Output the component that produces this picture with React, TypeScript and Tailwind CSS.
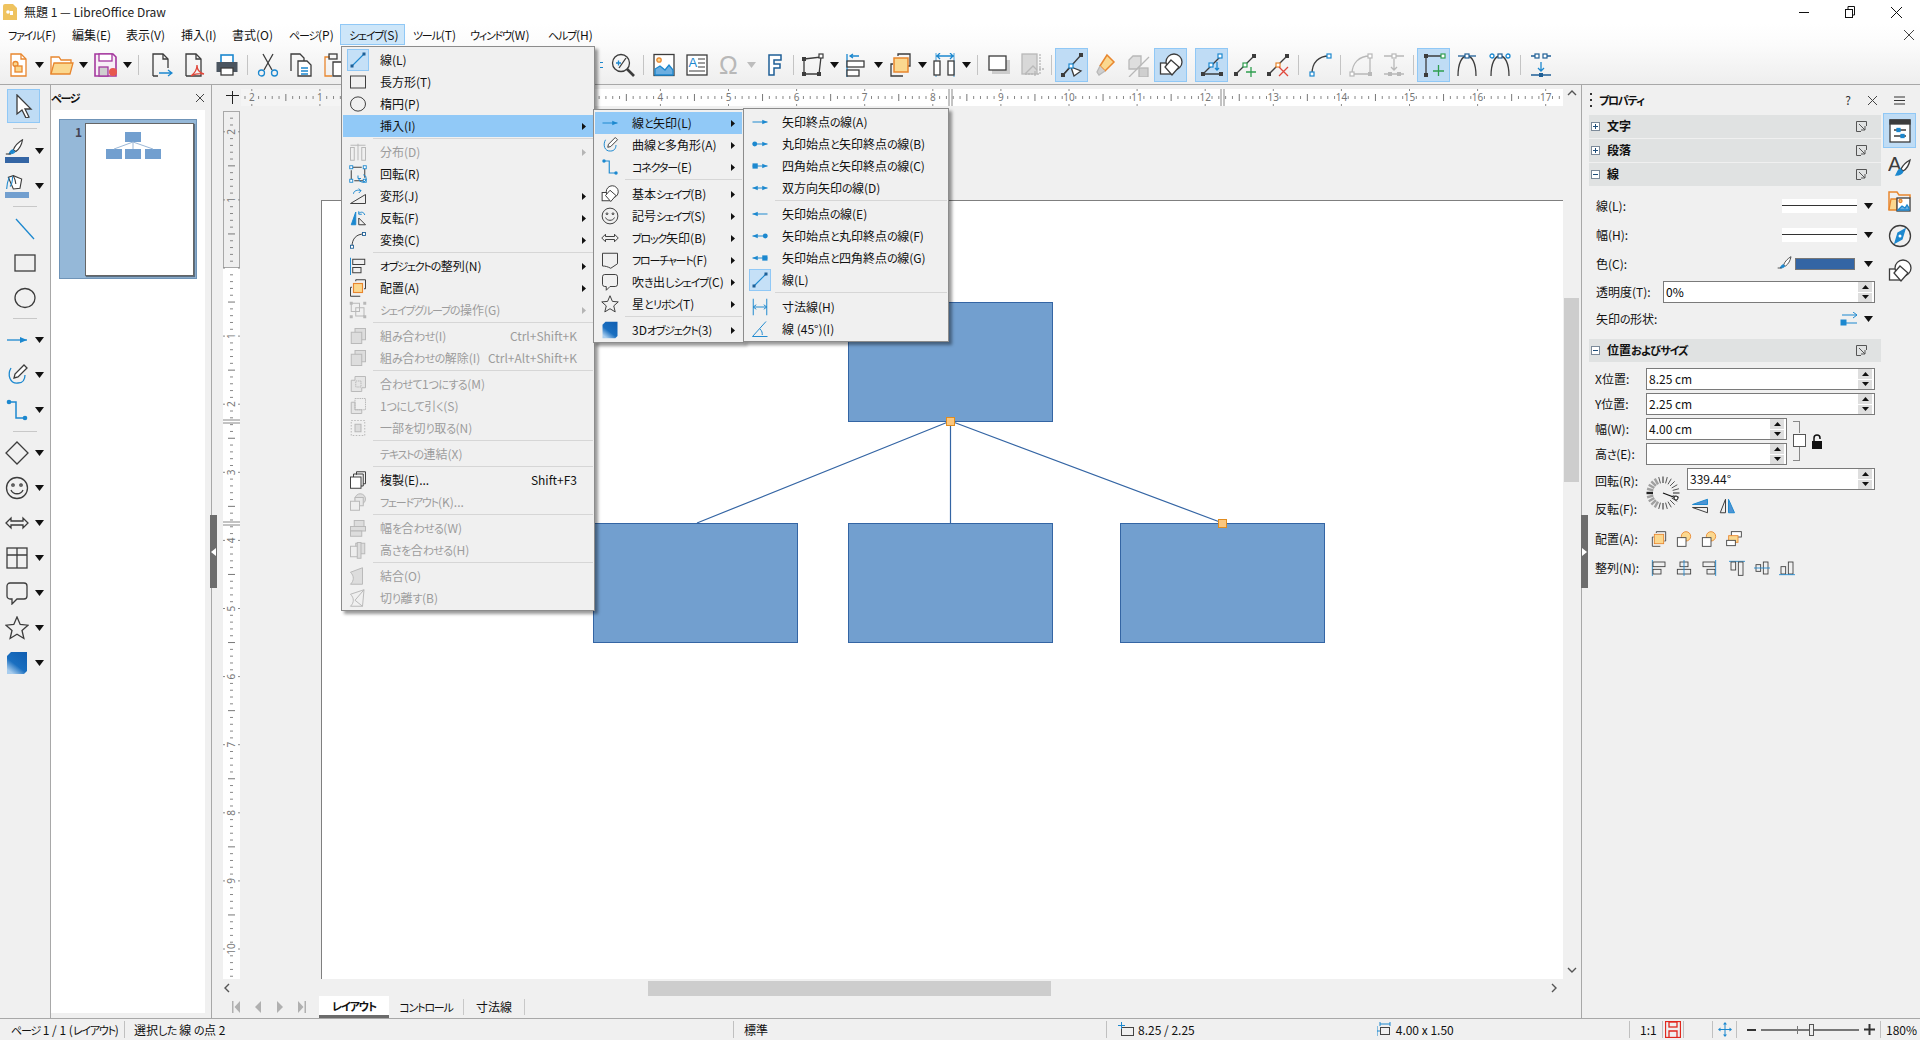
import type { ReactNode } from 'react';

const K = '#3c3c3c';
const B = '#1c88cf';
const D = '#1f5f96';
const O = '#e8862e';
const Y = '#fbd88f';
const G = '#b8b8b8';

// kana in the reference's UI font is much narrower than in Noto, so tighten just those runs
function J({ children }: { children: string }) {
  const parts = children.split(/([ぁ-ん]+|[ァ-ヶー]+)/);
  return (
    <>
      {parts.map((p, i) => {
        if (/^[ァ-ヶー]/.test(p)) return <span key={i} className="text-[11px] tracking-[-1.2px]">{p}</span>;
        if (/^[ぁ-ん]/.test(p)) return <span key={i} className="text-[11px] tracking-[-0.6px]">{p}</span>;
        return p;
      })}
    </>
  );
}

function Ic({ s = 24, children }: { s?: number; children: ReactNode }) {
  return (
    <svg width={s} height={s} viewBox="0 0 24 24" fill="none" stroke={K} strokeWidth={1.3} className="shrink-0">
      {children}
    </svg>
  );
}

const dot = (x: number, y: number, c = K) => <rect x={x - 2} y={y - 2} width="4" height="4" fill={c} stroke="none" />;
const hollow = (x: number, y: number, c = B) => <rect x={x - 2} y={y - 2} width="4" height="4" fill="#fff" stroke={c} strokeWidth="1.2" />;

function lineArrow(l: '' | 'a' | 'c' | 's', r: '' | 'a' | 'c' | 's') {
  const end = (k: string, x: number, dir: number) => {
    if (k === 'a') return <path d={`M${x} 12l${-7 * dir} -3v6z`} fill={B} stroke="none" />;
    if (k === 'c') return <circle cx={x - 3 * dir} cy="12" r="3.2" fill={B} stroke="none" />;
    if (k === 's') return <rect x={x - (dir > 0 ? 7 : 0)} y="8.5" width="7" height="7" fill={B} stroke="none" />;
    return null;
  };
  return (
    <>
      <path d="M2 12h20" stroke={B} />
      {end(l, 2, -1)}
      {end(r, 22, 1)}
    </>
  );
}

const cube = (
  <>
    <defs>
      <linearGradient id="cube" x1="1" y1="0" x2="0.3" y2="1">
        <stop offset="0" stopColor="#0f5db0" />
        <stop offset="0.65" stopColor="#1a6fc0" />
        <stop offset="1" stopColor="#a8cdee" />
      </linearGradient>
    </defs>
    <path d="M2 5L6 1h16v19l-3 3H2z" fill="url(#cube)" stroke="none" />
  </>
);

const ic: Record<string, ReactNode> = {
  newDoc: (
    <>
      <path d="M5 1h10l5 5v17H5z" stroke={O} fill="#fff" />
      <path d="M15 1v5h5" stroke={O} />
      <circle cx="9.5" cy="11" r="2.5" fill={Y} stroke={O} />
      <rect x="9" y="13" width="7" height="6" fill={Y} stroke={O} />
    </>
  ),
  open: (
    <>
      <path d="M1 21V4h8l2 3h10v3" stroke={O} fill="#fff" />
      <path d="M1 21l3-11h19l-3 11z" fill={Y} stroke={O} />
    </>
  ),
  save: (
    <>
      <path d="M1 1h18l3 3v19H1z" stroke="#a4379e" strokeWidth="1.6" fill="#f7eef6" />
      <rect x="5" y="1" width="13" height="7" stroke="#a4379e" fill="#fff" />
      <rect x="5" y="14" width="9" height="9" fill="#cfcfcf" stroke="#a4379e" />
      <circle cx="19" cy="19" r="4" fill="#e7584f" stroke="none" />
    </>
  ),
  exportDoc: (
    <>
      <path d="M4 23V1h10l5 5v9M4 23h5" />
      <path d="M14 1v5h5" />
      <path d="M10 20h13m-4-3l4 3-4 3" stroke={B} />
    </>
  ),
  pdf: (
    <>
      <path d="M4 23V1h10l5 5v17H4" />
      <path d="M14 1v5h5" />
      <path d="M9 23c4-3 6-7 6-11 0 5 3 8 7 9-5-1-9 0-13 2z" stroke="#e0483c" />
    </>
  ),
  print: (
    <>
      <rect x="6" y="2" width="12" height="8" stroke={B} fill="#fff" strokeWidth="1.6" />
      <rect x="1.5" y="9" width="21" height="10" fill="#4b5560" stroke="none" />
      <rect x="6" y="15" width="12" height="7" fill="#fff" stroke={K} />
    </>
  ),
  cut: (
    <>
      <path d="M7 1l9 16M17 1L8 17" />
      <circle cx="5.5" cy="20" r="3" stroke={B} />
      <circle cx="18.5" cy="20" r="3" stroke={B} />
    </>
  ),
  copy: (
    <>
      <path d="M2 18V1h9l4 4v3" />
      <path d="M9 23V8h9l4 4v11z" fill="#fff" />
      <path d="M12 15h7M12 18h7M12 21h7" stroke={B} />
    </>
  ),
  paste: (
    <>
      <path d="M8 4H3v19h7" stroke={O} />
      <rect x="7" y="1" width="8" height="5" />
      <path d="M11 23V9h11v14z" fill="#fff" />
    </>
  ),
  zoom: (
    <>
      <circle cx="10" cy="10" r="8.5" />
      <path d="M16 16l7 7" strokeWidth="2.6" />
      <path d="M5 10h5M7.5 7.5v5" stroke={B} />
      <path d="M8 15l7-10" stroke={K} />
    </>
  ),
  image: (
    <>
      <rect x="2" y="1.5" width="20" height="21" fill="#fff" />
      <circle cx="7" cy="7" r="2.2" fill={Y} stroke={O} />
      <path d="M3 22v-6l5-3 5 4 4-5 4 5v5z" fill="#6caee0" stroke={B} />
    </>
  ),
  textbox: (
    <>
      <rect x="2" y="2" width="20" height="20" fill="#fff" />
      <text x="3.5" y="14" fontSize="13" fill={B} stroke="none" fontFamily="Liberation Sans, sans-serif">A</text>
      <path d="M13 6h7M13 10h7M13 14h7M4 18h16" strokeWidth="1.2" />
    </>
  ),
  omega: <text x="1" y="21" fontSize="25" fill={G} stroke="none" fontFamily="Liberation Sans, sans-serif">Ω</text>,
  fontwork: <path d="M7 2h12v5h-7v4h6v4h-6v7H7z" stroke={D} strokeWidth="1.5" fill="#fff" />,
  points: (
    <>
      <path d="M3 6l17-2-2 17H3z" />
      {dot(3, 6)}
      {dot(3, 21)}
      {dot(18, 21)}
      {hollow(20, 3, K)}
    </>
  ),
  align: (
    <>
      <path d="M2 1v23" stroke={B} />
      <path d="M14 3H5m3-2L5 3l3 2" stroke={B} />
      <rect x="2" y="8" width="17" height="6" fill="#fff" />
      <rect x="2" y="17" width="12" height="6" fill="#fff" />
    </>
  ),
  arrange: (
    <>
      <path d="M9 3V1h12v12h-2M14 23H2V11h2" />
      <rect x="5" y="5" width="14" height="14" fill={Y} stroke={O} strokeWidth="1.5" />
    </>
  ),
  distribute: (
    <>
      <path d="M3 3h18M7 0l-3 3 3 3M17 0l3 3-3 3" stroke={B} />
      <path d="M3 0v24M21 0v24" stroke={B} strokeWidth="0.8" />
      <rect x="1" y="8" width="6" height="14" fill="#fff" />
      <rect x="15" y="8" width="6" height="14" fill="#fff" />
    </>
  ),
  shadow: (
    <>
      <path d="M5 7h18v14H5z" fill="#ccc" stroke="none" />
      <rect x="2" y="3" width="17" height="14" fill="#fff" />
    </>
  ),
  crop: (
    <>
      <rect x="2" y="1" width="15" height="20" fill="#d8d8d8" stroke={G} />
      <path d="M5 21l8-8 4 4" stroke={G} />
      <path d="M20 1v20H5M19 16h5M15 23v-5" stroke={G} strokeDasharray="2 1" />
    </>
  ),
  ptsToggle: (
    <>
      <path d="M3 22L21 2" />
      <path d="M11 13l-8 9" />
      <path d="M11 14l10 4-7 5z" fill="#fff" />
      {dot(3, 22)}
      {dot(21, 2)}
      {hollow(11, 13)}
    </>
  ),
  glue: (
    <>
      <path d="M14 2l7 7-9 9-5-5z" fill={Y} stroke={O} strokeWidth="1.5" />
      <path d="M7 13l-3 6 2 3 6-4" fill="#cfcfcf" stroke={G} />
    </>
  ),
  extrude: (
    <>
      <path d="M3 7l4-4h8v9l-4 4H3z" fill="#dedede" stroke={G} />
      <path d="M23 4L3 24" stroke={G} />
      <rect x="13" y="15" width="9" height="9" fill="#cfcfcf" stroke={G} />
    </>
  ),
  shapes: (
    <>
      <rect x="1.5" y="10" width="11" height="11" fill="#fff" />
      <circle cx="15" cy="9" r="8" fill="#fff" />
      <path d="M12 7l8 7-7 8-7-8z" fill="#fff" />
    </>
  ),
  lineAngle: (
    <>
      <path d="M3 21L20 4M3 21h18" />
      {dot(3, 21)}
      {dot(21, 21)}
      {hollow(20, 3)}
      {hollow(11, 12)}
      <path d="M17 9v8m-2-2l2 2 2-2" stroke={B} />
    </>
  ),
  addPt: (
    <>
      <path d="M3 21L20 4" />
      {dot(3, 21)}
      {dot(21, 3)}
      {hollow(12, 12, '#2f9e4f')}
      <path d="M13 19h10M18 14v10" stroke="#2f9e4f" />
    </>
  ),
  delPt: (
    <>
      <path d="M3 21L20 4" />
      {dot(3, 21)}
      {dot(21, 3)}
      {hollow(12, 12, O)}
      <path d="M13 14l9 9M22 14l-9 9" stroke="#e0483c" />
    </>
  ),
  curve: (
    <>
      <path d="M4 21C4 9 11 3 21 3" />
      {hollow(4, 21)}
      {hollow(21, 3)}
    </>
  ),
  curveOff: (
    <>
      <path d="M3 21C3 10 10 3 21 3v18H3" stroke={G} />
      {hollow(3, 21, G)}
      {hollow(21, 3, G)}
      {dot(21, 21, G)}
    </>
  ),
  pointDownOff: (
    <>
      <path d="M2 3h20M2 21h20" stroke={G} />
      {hollow(12, 3, G)}
      <path d="M12 6v11m-3-3l3 3 3-3" stroke={G} />
      {dot(8, 21, G)}
      {dot(17, 21, G)}
    </>
  ),
  cornerAdd: (
    <>
      <path d="M4 22V3h17" />
      {dot(4, 3)}
      {dot(4, 22)}
      {hollow(21, 3, '#2f9e4f')}
      <path d="M11 18h11M16.500 12v11" stroke="#2f9e4f" />
    </>
  ),
  arch: (
    <>
      <path d="M3 23C3 10 7 3 12 3s9 7 9 20" />
      <path d="M3 3h18" stroke={D} />
      {hollow(12, 3, D)}
    </>
  ),
  arch2: (
    <>
      <path d="M3 23C3 10 7 3 12 3s9 7 9 20" />
      <circle cx="4" cy="3" r="2" stroke={B} fill="#fff" />
      <circle cx="20" cy="3" r="2" stroke={B} fill="#fff" />
      {hollow(12, 3, D)}
    </>
  ),
  snapLine: (
    <>
      <path d="M2 3h4M18 3h4M2 22h20" stroke={D} />
      {hollow(8, 3, D)}
      {hollow(16, 3, D)}
      <path d="M12 9v9m-3-3l3 3 3-3" stroke={B} />
      {dot(12, 22, D)}
    </>
  ),
  line: (
    <>
      <path d="M4 20L20 4" stroke={B} strokeWidth="1.5" />
      {dot(4, 20, D)}
      {dot(20, 4, D)}
    </>
  ),
  rect: <rect x="2" y="4" width="20" height="16" />,
  ellipse: <ellipse cx="12" cy="12" rx="10" ry="9.500" />,
  dist: (
    <g stroke={G}>
      <rect x="2" y="6" width="5" height="17" />
      <rect x="17" y="6" width="5" height="17" />
      <path d="M12 1v22M2 3h20" />
    </g>
  ),
  rotate: (
    <>
      <path d="M3 3h18v18H3z" stroke={K} strokeDasharray="14 4" />
      {hollow(3, 3)}
      {hollow(21, 3)}
      {hollow(3, 21)}
      {hollow(21, 21)}
      <path d="M19 13a5 5 0 1 1-6 5m-1-4v4h4" stroke={B} />
    </>
  ),
  transform: (
    <>
      <path d="M2 22L22 10v12z" />
      <path d="M6 9c0-4 6-6 10-4m-3-3l3 3-3 3" stroke={B} />
    </>
  ),
  flip: (
    <>
      <path d="M9 4L3 21h6z" fill={B} stroke={B} />
      <path d="M13 12l9 9h-9z" />
      <path d="M13 6c3-3 7-2 8 2m-8-5v4h4" stroke={B} />
    </>
  ),
  convert: (
    <>
      <path d="M4 21C4 10 10 4 20 4" />
      {hollow(4, 21, D)}
      {hollow(20, 4, D)}
    </>
  ),
  alignObj: (
    <>
      <path d="M2 1v23" stroke={B} />
      <rect x="5" y="3" width="16" height="7" />
      <rect x="5" y="14" width="11" height="7" />
    </>
  ),
  arrangeM: (
    <>
      <path d="M9 3V1h13v12h-2M15 23H2V11h2" />
      <rect x="6" y="6" width="12" height="12" fill={Y} stroke={O} strokeWidth="1.5" />
    </>
  ),
  group: (
    <g stroke={G}>
      <rect x="3" y="3" width="11" height="11" />
      <rect x="9" y="9" width="11" height="11" />
      {dot(3, 3, G)}
      {dot(21, 3, G)}
      {dot(3, 21, G)}
      {dot(21, 21, G)}
    </g>
  ),
  combine: (
    <g stroke={G}>
      <rect x="8" y="2" width="14" height="15" fill="#ddd" />
      <rect x="3" y="7" width="14" height="15" fill="#ddd" />
    </g>
  ),
  merge: (
    <g stroke={G}>
      <path d="M8 7V2h14v15h-5v5H3V7z" fill="#e5e5e5" />
      <rect x="9" y="8" width="7" height="8" strokeDasharray="2 1" />
    </g>
  ),
  subtract: (
    <g stroke={G}>
      <path d="M8 7H3v15h14v-5H8z" fill="#e5e5e5" />
      <rect x="8" y="2" width="14" height="15" strokeDasharray="2 1" />
    </g>
  ),
  intersect: (
    <g stroke={G}>
      <rect x="3" y="2" width="18" height="20" strokeDasharray="2 2" />
      <rect x="8" y="7" width="8" height="10" fill="#ddd" />
    </g>
  ),
  dup: (
    <>
      <path d="M10 5V1h12v16h-3" />
      <path d="M6 9V4h13v16h-3" />
      <rect x="2" y="8" width="14" height="15" fill="#fff" />
    </>
  ),
  fade: (
    <g stroke={G}>
      <circle cx="15" cy="8" r="7" fill="#ddd" />
      <rect x="8" y="6" width="11" height="11" fill="#e8e8e8" />
      <rect x="2" y="11" width="12" height="12" fill="#eee" />
    </g>
  ),
  eqW: (
    <g stroke={G}>
      <rect x="7" y="2" width="13" height="11" fill="#ddd" />
      <rect x="2" y="10" width="20" height="6" fill="#ddd" />
      <rect x="2" y="16" width="15" height="7" fill="#ddd" />
    </g>
  ),
  eqH: (
    <g stroke={G}>
      <rect x="9" y="3" width="12" height="14" fill="#ddd" />
      <rect x="2" y="7" width="10" height="14" fill="#eee" />
      <rect x="11" y="2" width="5" height="21" fill="#ddd" />
    </g>
  ),
  connect: <path d="M2 7l16-6v22L2 23c5-5 5-11 0-16z" stroke={G} fill="#ddd" />,
  split: (
    <g stroke={G}>
      <path d="M2 7l18-6-2 22H2c5-5 5-11 0-16z" />
      <path d="M20 1L8 15l10 8" />
    </g>
  ),
  arrowE: lineArrow('', 'a'),
  circArrow: lineArrow('c', 'a'),
  sqArrow: lineArrow('s', 'a'),
  dblArrow: lineArrow('a', 'a'),
  arrowS: lineArrow('a', ''),
  arrowCirc: lineArrow('a', 'c'),
  arrowSq: lineArrow('a', 's'),
  curvePoly: (
    <>
      <path d="M6 5c-4 7-1 16 7 15 5 0 7-4 7-8" stroke={B} />
      <path d="M19 2l3 3-9 9-4 1 1-4z" fill="#fff" />
    </>
  ),
  connector: (
    <>
      <path d="M4 4h7v16h9" stroke={B} strokeWidth="1.5" />
      <circle cx="4" cy="4" r="2.300" fill={B} stroke="none" />
      <circle cx="20" cy="20" r="2.300" fill={B} stroke="none" />
    </>
  ),
  smile: (
    <>
      <circle cx="12" cy="12" r="10.500" />
      <circle cx="8" cy="9" r="1.200" />
      <circle cx="16" cy="9" r="1.200" />
      <path d="M6 14c2 5 10 5 12 0" />
    </>
  ),
  block: <path d="M1 12l5-5v3h12V7l5 5-5 5v-3H6v3z" />,
  flow: <path d="M2 3h20v14l-9 6c-4-2-7-3-11-3z" />,
  callout: <path d="M5 2h14a3 3 0 0 1 3 3v10a3 3 0 0 1-3 3h-7l-5 5v-5H5a3 3 0 0 1-3-3V5a3 3 0 0 1 3-3z" />,
  star: <path d="M12 1l3.200 7.500 7.800.7-6 5.300 1.900 8L12 18.300 5.100 22.500l1.900-8-6-5.300 7.800-.7z" />,
  cube,
  dim: (
    <>
      <path d="M3 1v22M21 1v22" stroke={B} />
      <path d="M3 12h18M7 9l-4 3 4 3M17 9l4 3-4 3" stroke={B} />
    </>
  ),
  angle45: (
    <>
      <path d="M2 22h20M2 22L20 2M12 12c3 3 3 5 3 8" stroke={B} />
    </>
  ),
  stack4: (
    <>
      <rect x="2" y="2" width="20" height="20" />
      <path d="M2 9h20M12 2v20" />
    </>
  ),
  diamond: <path d="M12 1l11 11-11 11L1 12z" />,
  diag: <path d="M3 3l18 20" stroke={B} />,
  cursor: <path d="M5 1l14 14h-6l4 8-3 1-4-8-5 4z" fill="#fff" />,
  brush: (
    <>
      <path d="M21 1c-5 3-9 7-11 12l3 2c4-3 7-8 8-14z" fill="#fff" />
      <path d="M10 13c-3 0-4 2-5 5 3 0 6-1 7-3" fill={B} stroke={B} />
      <path d="M1 18h6" />
    </>
  ),
  bucket: (
    <>
      <path d="M4 4l6-2 10 4-2 11-8 1z" fill="#fff" />
      <path d="M9 3c0 6-1 10-3 12M2 18c0-4 1-9 3-14" stroke={B} />
      <path d="M10 2c2 4 3 7 3 10" />
    </>
  ),
  sliders: (
    <>
      <rect x="2" y="1" width="20" height="22" fill="#fff" />
      <rect x="2" y="1" width="20" height="4" fill={K} />
      <path d="M6 11h12M6 17h12" />
      <rect x="9" y="9.500" width="3" height="3" fill={B} stroke={B} />
      <rect x="13" y="15.500" width="3" height="3" fill={B} stroke={B} />
    </>
  ),
  styleA: (
    <>
      <text x="0" y="17" fontSize="20" fill={K} stroke="none" fontFamily="Liberation Sans, sans-serif">A</text>
      <path d="M22 6c-4 2-7 5-9 9l2 2c4-2 6-6 7-11z" fill="#fff" />
      <path d="M13 15c-3 0-3 3-5 6 3 0 6-1 7-4" fill={B} stroke={B} />
    </>
  ),
  gallery: (
    <>
      <path d="M1 21V3h8l2 3h11v3" stroke={O} strokeWidth="1.500" />
      <path d="M1 21l2-11h6v11z" fill={Y} stroke={O} />
      <rect x="9" y="9" width="13" height="13" fill="#fff" />
      <circle cx="12.500" cy="12" r="1.500" fill={Y} stroke={O} />
      <path d="M10 21l4-4 3 2 2-3 2 3v2z" fill="#6caee0" stroke={B} />
    </>
  ),
  navigator: (
    <>
      <circle cx="12" cy="12" r="10.500" />
      <path d="M17 5l-3 10-7 4 3-10z" fill={B} stroke={B} />
      <circle cx="12" cy="12" r="1.500" fill="#fff" stroke="none" />
    </>
  ),
  flipV: (
    <>
      <path d="M2 10L22 3v7z" fill="#4e94d4" stroke={B} />
      <path d="M2 14h20v7z" />
    </>
  ),
  flipH: (
    <>
      <path d="M10 3v18H3z" />
      <path d="M14 3v18h8z" fill="#4e94d4" stroke={B} />
    </>
  ),
  front: (
    <>
      <path d="M8 3V1h14v14h-2M14 23H2V9h2" />
      <rect x="5" y="5" width="14" height="14" fill={Y} stroke={O} />
    </>
  ),
  forward: (
    <>
      <circle cx="15" cy="8" r="7" fill={Y} stroke={O} />
      <rect x="2" y="10" width="13" height="13" fill="#fff" />
    </>
  ),
  backward: (
    <>
      <circle cx="15" cy="8" r="7" fill={Y} stroke={O} />
      <rect x="2" y="10" width="13" height="13" fill="#fff" />
    </>
  ),
  back: (
    <>
      <rect x="8" y="1" width="15" height="8" fill="#fff" />
      <rect x="4" y="7" width="14" height="10" fill={Y} stroke={O} />
      <rect x="1" y="14" width="13" height="8" fill="#fff" />
    </>
  ),
  aLeft: (
    <>
      <path d="M2 0v24" stroke={B} />
      <rect x="3" y="3" width="18" height="7" />
      <rect x="3" y="14" width="12" height="7" />
    </>
  ),
  aCenter: (
    <>
      <rect x="6" y="3" width="12" height="7" />
      <rect x="2" y="14" width="20" height="7" />
      <path d="M12 0v24" stroke={B} />
    </>
  ),
  aRight: (
    <>
      <rect x="3" y="3" width="18" height="7" />
      <rect x="9" y="14" width="12" height="7" />
      <path d="M22 0v24" stroke={B} />
    </>
  ),
  aTop: (
    <>
      <path d="M0 2h24" stroke={B} />
      <rect x="3" y="3" width="7" height="12" />
      <rect x="14" y="3" width="7" height="20" />
    </>
  ),
  aMiddle: (
    <>
      <rect x="3" y="7" width="7" height="10" />
      <rect x="14" y="3" width="7" height="18" />
      <path d="M0 12h24" stroke={B} />
    </>
  ),
  aBottom: (
    <>
      <rect x="3" y="10" width="7" height="11" />
      <rect x="14" y="3" width="7" height="18" />
      <path d="M0 22h24" stroke={B} />
    </>
  ),
};

function Caret({ off = false }: { off?: boolean }) {
  return (
    <svg width="9" height="6" viewBox="0 0 9 6" className="shrink-0">
      <path d="M0 0h9L4.500 6z" fill={off ? '#bdbdbd' : '#111'} />
    </svg>
  );
}

function TbIcon({ name, active = false }: { name: string; active?: boolean }) {
  return (
    <div
      className={`flex h-[34px] w-[33px] shrink-0 items-center justify-center border ${
        active ? 'border-[#90c8f6] bg-[#bfdcf5]' : 'border-transparent'
      }`}
    >
      <Ic>{ic[name]}</Ic>
    </div>
  );
}

function TbCaret({ off = false }: { off?: boolean }) {
  return (
    <div className="flex w-[11px] shrink-0 items-center justify-center">
      <Caret off={off} />
    </div>
  );
}

function TbSep({ className }: { className: string }) {
  return (
    <div className={`flex shrink-0 justify-center ${className}`}>
      <div className="h-[20px] w-px bg-[#c4c4c4]" />
    </div>
  );
}

type Row =
  | { sep: 4 | 5 }
  | { l: string; i?: string; arrow?: boolean; off?: boolean; on?: boolean; hi?: boolean; key?: string };

const S4: Row = { sep: 4 };
const S5: Row = { sep: 5 };

const shapeMenu: Row[] = [
  { l: '線(L)', i: 'line', on: true },
  { l: '長方形(T)', i: 'rect' },
  { l: '楕円(P)', i: 'ellipse' },
  { l: '挿入(I)', arrow: true, hi: true },
  S4,
  { l: '分布(D)', i: 'dist', arrow: true, off: true },
  { l: '回転(R)', i: 'rotate' },
  { l: '変形(J)', i: 'transform', arrow: true },
  { l: '反転(F)', i: 'flip', arrow: true },
  { l: '変換(C)', i: 'convert', arrow: true },
  S4,
  { l: 'オブジェクトの整列(N)', i: 'alignObj', arrow: true },
  { l: '配置(A)', i: 'arrangeM', arrow: true },
  { l: 'シェイプグループの操作(G)', i: 'group', arrow: true, off: true },
  S4,
  { l: '組み合わせ(I)', i: 'combine', off: true, key: 'Ctrl+Shift+K' },
  { l: '組み合わせの解除(I)', i: 'combine', off: true, key: 'Ctrl+Alt+Shift+K' },
  S4,
  { l: '合わせて1つにする(M)', i: 'merge', off: true },
  { l: '1つにして引く(S)', i: 'subtract', off: true },
  { l: '一部を切り取る(N)', i: 'intersect', off: true },
  S4,
  { l: 'テキストの連結(X)', off: true },
  S4,
  { l: '複製(E)...', i: 'dup', key: 'Shift+F3' },
  { l: 'フェードアウト(K)...', i: 'fade', off: true },
  S4,
  { l: '幅を合わせる(W)', i: 'eqW', off: true },
  { l: '高さを合わせる(H)', i: 'eqH', off: true },
  S4,
  { l: '結合(O)', i: 'connect', off: true },
  { l: '切り離す(B)', i: 'split', off: true },
];

const insertMenu: Row[] = [
  { l: '線と矢印(L)', i: 'arrowE', arrow: true, hi: true },
  { l: '曲線と多角形(A)', i: 'curvePoly', arrow: true },
  { l: 'コネクター(E)', i: 'connector', arrow: true },
  S5,
  { l: '基本シェイプ(B)', i: 'shapes', arrow: true },
  { l: '記号シェイプ(S)', i: 'smile', arrow: true },
  { l: 'ブロック矢印(B)', i: 'block', arrow: true },
  { l: 'フローチャート(F)', i: 'flow', arrow: true },
  { l: '吹き出しシェイプ(C)', i: 'callout', arrow: true },
  { l: '星とリボン(T)', i: 'star', arrow: true },
  S4,
  { l: '3Dオブジェクト(3)', i: 'cube', arrow: true },
];

const lineMenu: Row[] = [
  { l: '矢印終点の線(A)', i: 'arrowE' },
  { l: '丸印始点と矢印終点の線(B)', i: 'circArrow' },
  { l: '四角始点と矢印終点の線(C)', i: 'sqArrow' },
  { l: '双方向矢印の線(D)', i: 'dblArrow' },
  S4,
  { l: '矢印始点の線(E)', i: 'arrowS' },
  { l: '矢印始点と丸印終点の線(F)', i: 'arrowCirc' },
  { l: '矢印始点と四角終点の線(G)', i: 'arrowSq' },
  { l: '線(L)', i: 'line', on: true },
  S5,
  { l: '寸法線(H)', i: 'dim' },
  { l: '線 (45°)(I)', i: 'angle45' },
];

function Menu({ rows, className }: { rows: Row[]; className: string }) {
  return (
    <div
      className={`absolute z-20 border border-[#8c8c8c] bg-[#f0f0f0] px-px pt-[2px] pb-px shadow-[3px_3px_3px_rgba(0,0,0,0.4)] ${className}`}
    >
      {rows.map((r, idx) => {
        if ('sep' in r) {
          return (
            <div key={idx} className={`pl-[30px] pt-px ${r.sep === 4 ? 'h-[4px]' : 'h-[5px]'}`}>
              <div className="h-px bg-[#d6d6d6]" />
            </div>
          );
        }
        return (
          <div
            key={idx}
            className={`flex h-[22px] items-center pl-[4px] pr-[7px] ${r.hi ? 'bg-[#91c9f7]' : ''} ${
              r.off ? 'text-[#9c9c9c]' : 'text-[#111]'
            }`}
          >
            <div
              className={`mr-[11px] flex h-[22px] w-[22px] shrink-0 items-center justify-center border ${
                r.on ? 'border-[#90c8f6] bg-[#c5e0f7]' : 'border-transparent'
              }`}
            >
              {r.i && <Ic s={18}>{ic[r.i]}</Ic>}
            </div>
            <span className="whitespace-nowrap">
              <J>{r.l}</J>
            </span>
            {r.key && <span className="ml-auto mr-[9px] whitespace-nowrap">{r.key}</span>}
            {r.arrow && (
              <svg width="4" height="7" viewBox="0 0 4 7" className="ml-auto shrink-0">
                <path d="M0 0l4 3.500L0 7z" fill={r.off ? '#b5b5b5' : '#111'} />
              </svg>
            )}
          </div>
        );
      })}
    </div>
  );
}

const menuBar = [
  ['ファイル(F)', 'w-[64px]'],
  ['編集(E)', 'w-[54px]'],
  ['表示(V)', 'w-[55px]'],
  ['挿入(I)', 'w-[51px]'],
  ['書式(O)', 'w-[57px]'],
  ['ページ(P)', 'w-[59px]'],
  ['シェイプ(S)', 'w-[65px] border border-[#90c8f6] bg-[#cde6f9]'],
  ['ツール(T)', 'w-[57px]'],
  ['ウィンドウ(W)', 'w-[78px]'],
  ['ヘルプ(H)', 'w-[60px]'],
];

function HRuler() {
  const ticks: ReactNode[] = [];
  for (let i = -22; i <= 172; i++) {
    const x = 147 + 6.81 * i;
    if (x < 0) continue;
    if (i % 10 === 0) {
      ticks.push(<path key={i} d={`M${x} 0v2M${x} 15v2`} stroke="#8a8a8a" />);
      if (i !== 0)
        ticks.push(
          <text key={`t${i}`} x={x} y="12" fontSize="10" fill="#777" textAnchor="middle" fontFamily="Noto Sans, sans-serif">
            {Math.abs(i / 10)}
          </text>
        );
    } else if (i % 5 === 0) {
      ticks.push(<path key={i} d={`M${x} 5v7`} stroke="#777" />);
    } else {
      ticks.push(<path key={i} d={`M${x} 7v3`} stroke="#888" />);
    }
  }
  return (
    <svg width="1322" height="17" className="block shrink-0 bg-white">
      <rect x="0" y="0" width="147" height="17" fill="#f4f4f4" />
      {ticks}
      <path d="M708 0v17M711 0v17M980 0v17M983 0v17" stroke="#888" />
    </svg>
  );
}

function VRuler() {
  const ticks: ReactNode[] = [];
  for (let i = -22; i <= 104; i++) {
    const y = 157 + 6.81 * i;
    if (y < 0) continue;
    if (i % 10 === 0) {
      ticks.push(<path key={i} d={`M0 ${y}h2M15 ${y}h2`} stroke="#8a8a8a" />);
      if (i !== 0)
        ticks.push(
          <text
            key={`t${i}`}
            x="8.500"
            y={y + 3.500}
            fontSize="10"
            fill="#777"
            textAnchor="middle"
            transform={`rotate(-90 8.500 ${y})`}
            fontFamily="Noto Sans, sans-serif"
          >
            {Math.abs(i / 10)}
          </text>
        );
    } else if (i % 5 === 0) {
      ticks.push(<path key={i} d={`M5 ${y}h7`} stroke="#777" />);
    } else {
      ticks.push(<path key={i} d={`M7 ${y}h3`} stroke="#888" />);
    }
  }
  return (
    <svg width="17" height="868" className="block bg-white">
      <rect x="0.500" y="0.500" width="16" height="156" fill="#efefef" stroke="#a8a8a8" />
      {ticks}
      <path d="M0 309h17M0 312h17M0 411h17M0 414h17" stroke="#888" />
    </svg>
  );
}

function Canvas() {
  return (
    <div className="relative h-full w-full border-t border-l border-[#7f7f7f] bg-white">
      <div className="absolute left-[526px] top-[101px] h-[120px] w-[205px] border border-[#3465a4] bg-[#729fcf]" />
      <div className="absolute left-[271px] top-[322px] h-[120px] w-[205px] border border-[#3465a4] bg-[#729fcf]" />
      <div className="absolute left-[526px] top-[322px] h-[120px] w-[205px] border border-[#3465a4] bg-[#729fcf]" />
      <div className="absolute left-[798px] top-[322px] h-[120px] w-[205px] border border-[#3465a4] bg-[#729fcf]" />
      <svg width="1242" height="460" className="absolute left-0 top-0">
        <path d="M628.500 220L375 322M628.500 220V322M628.500 220L900.500 322" stroke="#3465a4" strokeWidth="1.200" fill="none" />
      </svg>
      <div className="absolute left-[624px] top-[216px] h-[9px] w-[9px] border border-[#e08c20] bg-[#fbc77e]" />
      <div className="absolute left-[896px] top-[318px] h-[9px] w-[9px] border border-[#e08c20] bg-[#fbc77e]" />
    </div>
  );
}

function Spin() {
  return (
    <div className="ml-auto mr-[2px] flex h-[20px] w-[14px] shrink-0 flex-col gap-px">
      {[0, 1].map((n) => (
        <div key={n} className="flex flex-1 items-center justify-center bg-[#dedede]">
          <svg width="7" height="4" viewBox="0 0 7 4">
            <path d={n === 0 ? 'M0 4h7L3.500 0z' : 'M0 0h7L3.500 4z'} fill="#111" />
          </svg>
        </div>
      ))}
    </div>
  );
}

function Field({ value, className }: { value: string; className: string }) {
  return (
    <div className={`flex h-[22px] items-center border border-[#7a7a7a] bg-white pl-[2px] ${className}`}>
      <span className="whitespace-nowrap">{value}</span>
      <Spin />
    </div>
  );
}

function Expand() {
  return (
    <svg width="11" height="11" viewBox="0 0 11 11" className="shrink-0" fill="none" stroke="#555">
      <path d="M10.500 5V.5H.5v10H5" />
      <path d="M3 3l6 6M9 5v4H5" />
    </svg>
  );
}

function Heading({ title, open = false }: { title: string; open?: boolean }) {
  return (
    <div className="mb-px flex h-[23px] items-center bg-[#e0e2e2] pl-[2px] pr-[14px]">
      <svg width="9" height="9" viewBox="0 0 9 9" className="shrink-0" fill="#fff" stroke="#7c8a99">
        <rect x="0.500" y="0.500" width="8" height="8" />
        <path d={open ? 'M2 4.500h5' : 'M2 4.500h5M4.500 2v5'} stroke="#1f4e79" />
      </svg>
      <span className="mb-[2px] ml-[7px] whitespace-nowrap font-bold text-[#111]">
        <J>{title}</J>
      </span>
      <div className="ml-auto">
        <Expand />
      </div>
    </div>
  );
}

function Dial() {
  const ticks: ReactNode[] = [];
  for (let a = 0; a < 360; a += 15) {
    const r = (a * Math.PI) / 180;
    const c = Math.cos(r);
    const s = Math.sin(r);
    const dark = a % 90 === 0;
    const shade = a > 110 && a < 250;
    ticks.push(
      <path
        key={a}
        d={`M${17 + c * 10} ${17 + s * 10}L${17 + c * 16.500} ${17 + s * 16.500}`}
        stroke={dark ? '#222' : shade ? '#a0a0a0' : '#555'}
        strokeWidth={shade ? 2.4 : 1}
      />
    );
  }
  return (
    <svg width="34" height="34" viewBox="0 0 34 34" className="shrink-0">
      {ticks}
      <path d="M17 17l13 5" stroke="#111" strokeWidth="1.300" />
      <circle cx="30" cy="22" r="2" fill="#fff" stroke="#111" />
    </svg>
  );
}

function SideRow({ label, children, className = 'h-[29px]' }: { label: string; children?: ReactNode; className?: string }) {
  return (
    <div className={`flex items-center pl-[7px] pr-[6px] ${className}`}>
      <span className="whitespace-nowrap text-[#111]">
        <J>{label}</J>
      </span>
      {children}
    </div>
  );
}

function LinePreview() {
  return (
    <>
      <div className="ml-auto flex h-[14px] w-[75px] items-center bg-white">
        <div className="h-px w-full bg-[#333]" />
      </div>
      <div className="ml-[7px] mr-[2px]">
        <Caret />
      </div>
    </>
  );
}

function Sidebar() {
  return (
    <div className="relative flex w-[339px] shrink-0 border-l border-[#a8a8a8]">
      <div className="absolute left-[-1px] top-[430px] z-10 flex h-[73px] w-[7px] items-center justify-center bg-[#6d6d6d]">
        <svg width="5" height="8" viewBox="0 0 5 8">
          <path d="M0 0l5 4-5 4z" fill="#fff" />
        </svg>
      </div>
      <div className="ml-[7px] w-[292px] shrink-0">
        <div className="flex h-[30px] items-center">
          <svg width="3" height="14" viewBox="0 0 3 14" className="ml-[1px]">
            <path d="M0 0h2v2H0zM0 6h2v2H0zM0 12h2v2H0z" fill="#333" />
          </svg>
          <span className="ml-[6px] whitespace-nowrap font-bold text-[#111]">
            <J>プロパティ</J>
          </span>
          <span className="ml-auto text-[#333]">?</span>
          <svg width="11" height="11" viewBox="0 0 11 11" className="ml-[16px] mr-[3px]" stroke="#444" fill="none">
            <path d="M1 1l9 9M10 1l-9 9" />
          </svg>
        </div>
        <Heading title="文字" />
        <Heading title="段落" />
        <Heading title="線" open />
        <div className="pt-[4px]">
          <SideRow label="線(L):">
            <LinePreview />
          </SideRow>
          <SideRow label="幅(H):">
            <LinePreview />
          </SideRow>
          <SideRow label="色(C):">
            <div className="ml-auto mr-[2px]">
              <Ic s={16}>{ic.brush}</Ic>
            </div>
            <div className="h-[12px] w-[60px] border border-[#777] bg-[#3465a4]" />
            <div className="ml-[9px] mr-[2px]">
              <Caret />
            </div>
          </SideRow>
          <SideRow label="透明度(T):" className="mt-[2px] h-[24px]">
            <Field value="0%" className="ml-auto w-[212px]" />
          </SideRow>
          <SideRow label="矢印の形状:" className="h-[30px]">
            <div className="ml-auto">
              <svg width="18" height="14" viewBox="0 0 18 14" fill="none" stroke={B}>
                <path d="M2 3h15m-4-3l4 3-4 3" />
                <path d="M6 11h11" />
                <rect x="1" y="8" width="5" height="5" fill={B} />
              </svg>
            </div>
            <div className="ml-[6px] mr-[2px]">
              <Caret />
            </div>
          </SideRow>
        </div>
        <div className="mt-[5px]">
          <Heading title="位置およびサイズ" open />
        </div>
        <div className="flex flex-col gap-[3px] pl-[6px] pr-[6px] pt-[5px] text-[#111]">
          <div className="flex items-center">
            <span className="w-[51px] shrink-0">X位置:</span>
            <Field value="8.25 cm" className="flex-1" />
          </div>
          <div className="flex items-center">
            <span className="w-[51px] shrink-0">Y位置:</span>
            <Field value="2.25 cm" className="flex-1" />
          </div>
          <div className="flex items-center">
            <span className="w-[51px] shrink-0">幅(W):</span>
            <Field value="4.00 cm" className="w-[141px]" />
            <div className="relative ml-[6px] h-[22px] w-[40px]">
              <div className="absolute left-0 top-[3px] h-[12px] w-[7px] border-t border-r border-[#888]" />
              <div className="absolute left-0 top-[16px] h-[13px] w-[13px] border border-[#555] bg-white" />
              <div className="absolute left-0 top-[29px] h-[14px] w-[7px] border-b border-r border-[#888]" />
              <svg width="12" height="15" viewBox="0 0 12 15" className="absolute left-[18px] top-[16px]">
                <path d="M3 7V4a3 3 0 0 1 6 0v1" fill="none" stroke="#111" strokeWidth="1.500" />
                <rect x="1" y="7" width="10" height="8" fill="#111" />
              </svg>
            </div>
          </div>
          <div className="flex items-center">
            <span className="w-[51px] shrink-0">
              <J>高さ(E):</J>
            </span>
            <Field value="" className="w-[141px]" />
          </div>
          <div className="flex items-start">
            <div className="flex w-[51px] shrink-0 flex-col gap-[12px] pt-[5px]">
              <span>回転(R):</span>
              <span>反転(F):</span>
            </div>
            <div className="mt-[8px]">
              <Dial />
            </div>
            <div className="ml-[7px] flex-1">
              <Field value="339.44°" className="w-full" />
              <div className="mt-[7px] flex gap-[9px] pl-[4px]">
                <Ic s={18}>{ic.flipV}</Ic>
                <Ic s={18}>{ic.flipH}</Ic>
              </div>
            </div>
          </div>
          <div className="mt-[4px] flex h-[29px] items-center">
            <span className="w-[51px] shrink-0">配置(A):</span>
            {['front', 'forward', 'backward', 'back'].map((n) => (
              <div key={n} className="flex w-[25px] justify-center">
                <Ic s={16}>{ic[n]}</Ic>
              </div>
            ))}
          </div>
          <div className="mt-[-3px] flex h-[29px] items-center">
            <span className="w-[51px] shrink-0">整列(N):</span>
            {['aLeft', 'aCenter', 'aRight'].map((n) => (
              <div key={n} className="flex w-[25px] justify-center">
                <Ic s={16}>{ic[n]}</Ic>
              </div>
            ))}
            <div className="w-[3px]" />
            {['aTop', 'aMiddle', 'aBottom'].map((n) => (
              <div key={n} className="flex w-[25px] justify-center">
                <Ic s={16}>{ic[n]}</Ic>
              </div>
            ))}
          </div>
        </div>
      </div>
      <div className="ml-[2px] flex w-[33px] shrink-0 flex-col">
        <div className="flex h-[28px] items-center justify-center">
          <svg width="11" height="9" viewBox="0 0 11 9" stroke="#333" className="mt-[2px]">
            <path d="M0 1h11M0 4.500h11M0 8h11" />
          </svg>
        </div>
        {['sliders', 'styleA', 'gallery', 'navigator', 'shapes'].map((n, i) => (
          <div
            key={n}
            className={`flex h-[35px] items-center justify-center border ${
              i === 0 ? 'border-[#90c8f6] bg-[#bfdcf5]' : 'border-transparent'
            }`}
          >
            <Ic>{ic[n]}</Ic>
          </div>
        ))}
      </div>
    </div>
  );
}

function Drop({ name }: { name: string }) {
  return (
    <div className="flex h-[35px] items-center pl-[5px]">
      <Ic>{ic[name]}</Ic>
      <div className="ml-[6px]">
        <Caret />
      </div>
    </div>
  );
}

function LeftSep({ className }: { className: string }) {
  return (
    <div className={`flex items-center justify-center ${className}`}>
      <div className="h-px w-[24px] bg-[#c8c8c8]" />
    </div>
  );
}

function Plain({ name }: { name: string }) {
  return (
    <div className="flex h-[35px] items-center justify-center">
      <Ic>{ic[name]}</Ic>
    </div>
  );
}

function LeftToolbar() {
  return (
    <div className="flex w-[51px] shrink-0 flex-col border-r border-[#a8a8a8] pt-[4px]">
      <div className="ml-[7px] flex h-[34px] w-[33px] items-center justify-center border border-[#90c8f6] bg-[#bfdcf5]">
        <Ic>{ic.cursor}</Ic>
      </div>
      <LeftSep className="h-[10px]" />
      <div className="flex h-[35px] items-center pl-[5px]">
        <div className="relative h-[24px] w-[24px] shrink-0">
          <Ic s={20}>{ic.brush}</Ic>
          <div className="absolute bottom-0 left-0 h-[6px] w-[24px] bg-[#3465a4]" />
        </div>
        <div className="ml-[6px]">
          <Caret />
        </div>
      </div>
      <div className="flex h-[35px] items-center pl-[5px]">
        <div className="relative h-[24px] w-[24px] shrink-0">
          <Ic s={20}>{ic.bucket}</Ic>
          <div className="absolute bottom-0 left-0 h-[6px] w-[24px] bg-[#729fcf]" />
        </div>
        <div className="ml-[6px]">
          <Caret />
        </div>
      </div>
      <LeftSep className="h-[7px]" />
      <Plain name="diag" />
      <Plain name="rect" />
      <Plain name="ellipse" />
      <LeftSep className="h-[7px]" />
      <Drop name="arrowE" />
      <Drop name="curvePoly" />
      <Drop name="connector" />
      <LeftSep className="h-[8px]" />
      <Drop name="diamond" />
      <Drop name="smile" />
      <Drop name="block" />
      <Drop name="stack4" />
      <Drop name="callout" />
      <Drop name="star" />
      <Drop name="cube" />
    </div>
  );
}

function PagesPanel() {
  return (
    <div className="relative flex w-[161px] shrink-0 flex-col border-r border-[#a8a8a8]">
      <div className="flex h-[25px] items-center justify-between pr-[6px]">
        <span className="whitespace-nowrap font-bold text-[#111]">
          <J>ページ</J>
        </span>
        <svg width="10" height="10" viewBox="0 0 10 10" stroke="#444" fill="none">
          <path d="M1 1l8 8M9 1l-8 8" />
        </svg>
      </div>
      <div className="mr-[6px] h-[903px] bg-white pl-[8px] pt-[9px]">
        <div className="flex h-[160px] w-[138px] border border-[#6f94b8] bg-[#95b8d8] pl-[15px] pt-[3px]">
          <span className="w-[10px] shrink-0 pt-[1px] font-bold text-[#445]">1</span>
          <div className="relative h-[153px] w-[109px] border border-[#666] bg-white shadow-[1px_1px_1px_rgba(0,0,0,0.4)]">
            <div className="absolute left-[39px] top-[8px] h-[10px] w-[16px] bg-[#729fcf]" />
            <div className="absolute left-[20px] top-[25px] h-[10px] w-[16px] bg-[#729fcf]" />
            <div className="absolute left-[39px] top-[25px] h-[10px] w-[16px] bg-[#729fcf]" />
            <div className="absolute left-[59px] top-[25px] h-[10px] w-[16px] bg-[#729fcf]" />
            <svg width="109" height="30" className="absolute left-0 top-0">
              <path d="M47 18L28 25M47 18v7M47 18l20 7" stroke="#9bb7d6" fill="none" />
            </svg>
          </div>
        </div>
      </div>
    </div>
  );
}

function Chevron({ dir }: { dir: 'u' | 'd' | 'l' | 'r' }) {
  const d = { u: 'M1 6l4-4 4 4', d: 'M1 2l4 4 4-4', l: 'M7 1L3 5l4 4', r: 'M3 1l4 4-4 4' }[dir];
  return (
    <svg width="10" height="10" viewBox="0 0 10 10" fill="none" stroke="#555" strokeWidth="1.400" className="shrink-0">
      <path d={d} />
    </svg>
  );
}

function EditArea() {
  return (
    <div className="relative flex w-[1369px] shrink-0 flex-col">
      <div className="absolute left-[-2px] top-[430px] z-10 flex h-[73px] w-[7px] items-center justify-center bg-[#6d6d6d]">
        <svg width="5" height="8" viewBox="0 0 5 8">
          <path d="M5 0L0 4l5 4z" fill="#fff" />
        </svg>
      </div>
      <div className="flex h-[21px] items-end pl-[11px]">
        <div className="flex h-[17px] w-[18px] shrink-0 items-center justify-center">
          <svg width="13" height="13" viewBox="0 0 13 13" stroke="#222" fill="none">
            <path d="M0 4.500h13M6.500 0V13" />
          </svg>
        </div>
        <HRuler />
        <div className="flex h-[17px] w-[17px] items-start justify-center">
          <Chevron dir="u" />
        </div>
      </div>
      <div className="flex h-[873px] pl-[11px]">
        <div className="w-[17px] shrink-0 pt-[5px]">
          <VRuler />
        </div>
        <div className="w-[1323px] shrink-0 pl-[81px] pt-[94px]">
          <Canvas />
        </div>
        <div className="flex w-[17px] shrink-0 flex-col items-center pb-[3px] pt-[192px]">
          <div className="h-[184px] w-[15px] bg-[#cdcdcd]" />
          <div className="mt-auto">
            <Chevron dir="d" />
          </div>
        </div>
      </div>
      <div className="mt-px flex h-[16px] items-center pl-[10px] pr-[22px]">
        <Chevron dir="l" />
        <div className="ml-[416px] h-[15px] w-[403px] bg-[#cdcdcd]" />
        <div className="ml-auto">
          <Chevron dir="r" />
        </div>
      </div>
      <div className="flex h-[22px] pl-[13px]">
        {[0, 1, 2, 3].map((n) => (
          <div key={n} className="flex w-[22px] items-center justify-center">
            <svg width="8" height="12" viewBox="0 0 8 12" fill="#b0b0b0">
              {n === 0 && <path d="M0 0h1.500v12H0zM8 0v12L2.500 6z" />}
              {n === 1 && <path d="M7 0v12L1 6z" />}
              {n === 2 && <path d="M1 0v12l6-6z" />}
              {n === 3 && <path d="M6.500 0H8v12H6.500zM0 0v12l5.500-6z" />}
            </svg>
          </div>
        ))}
        <div className="ml-[6px] flex w-[70px] items-center justify-center whitespace-nowrap border-b-[3px] border-[#6b6b6b] bg-white font-bold text-[#111]">
          <span>
            <J>レイアウト</J>
          </span>
        </div>
        <div className="flex h-[16px] w-[75px] items-center justify-center self-center whitespace-nowrap border-r border-[#c8c8c8] text-[#111]">
          <span>
            <J>コントロール</J>
          </span>
        </div>
        <div className="flex h-[16px] w-[61px] items-center justify-center self-center border-r border-[#c8c8c8] text-[#111]">
          寸法線
        </div>
      </div>
    </div>
  );
}

function Cell({ className, children }: { className: string; children?: ReactNode }) {
  return (
    <div className={`flex h-[17px] shrink-0 items-center whitespace-nowrap border-r border-[#c0c0c0] ${className}`}>
      {children}
    </div>
  );
}

function StatusBar() {
  return (
    <div className="flex h-[22px] items-center border-t border-[#a8a8a8] text-[#111]">
      <Cell className="w-[125px] pl-[11px]">
        <span>
          <J>ページ 1 / 1 (レイアウト)</J>
        </span>
      </Cell>
      <Cell className="w-[609px] pl-[9px]">
        <span>
          <J>選択した 線 の点 2</J>
        </span>
      </Cell>
      <Cell className="w-[373px] pl-[10px]">標準</Cell>
      <Cell className="w-[523px] pl-[11px]">
        <svg width="16" height="15" viewBox="0 0 16 15" fill="none" className="mr-[4px] shrink-0">
          <rect x="3.500" y="5.500" width="12" height="8" stroke="#444" />
          <path d="M0 3.500h7M3.500 0v7" stroke={B} />
        </svg>
        <span>8.25 / 2.25</span>
        <svg width="16" height="15" viewBox="0 0 16 15" fill="none" className="ml-[182px] mr-[3px] shrink-0">
          <rect x="3.500" y="5.500" width="9" height="7" stroke="#444" />
          <path d="M3 0v4M13 0v4M3 2h10M0 4v10M0 9h3" stroke={B} />
        </svg>
        <span>4.00 x 1.50</span>
      </Cell>
      <Cell className="w-[33px] pl-[10px]">1:1</Cell>
      <Cell className="w-[21px] pl-[2px]">
        <svg width="16" height="17" viewBox="0 0 16 17" fill="none" stroke="#e0281e" strokeWidth="1.300">
          <rect x="0.500" y="0.500" width="15" height="16" />
          <rect x="4" y="1" width="8" height="5" />
          <path d="M4 16V10h8v6" />
        </svg>
      </Cell>
      <Cell className="w-[29px]" />
      <Cell className="w-[24px] justify-center">
        <svg width="14" height="15" viewBox="0 0 14 15" fill={B} stroke={B}>
          <path d="M1 7.500h12M7 2v11" />
          <path d="M7 0l2 2.500H5zM7 15l2-2.500H5zM0 7.500L2.500 5.500v4zM14 7.500l-2.500-2v4z" stroke="none" />
        </svg>
      </Cell>
      <Cell className="w-[144px]">
        <div className="ml-[10px] h-[2px] w-[9px] bg-[#333]" />
        <div className="relative ml-[5px] h-[2px] w-[98px] bg-[#777]">
          <div className="absolute left-[36px] top-[-3px] h-[8px] w-px bg-[#777]" />
          <div className="absolute left-[48px] top-[-5px] h-[12px] w-[5px] border border-[#555] bg-[#eee]" />
        </div>
        <svg width="11" height="11" viewBox="0 0 11 11" className="ml-[5px]" stroke="#333" strokeWidth="2">
          <path d="M0 5.500h11M5.500 0v11" />
        </svg>
      </Cell>
      <div className="pl-[5px]">180%</div>
    </div>
  );
}

export default function App() {
  return (
    <div className="relative flex h-[1040px] w-[1920px] flex-col overflow-hidden bg-[#f0f0f0] font-['Noto_Sans_CJK_JP',sans-serif] text-[12px] leading-[16px] [font-feature-settings:'palt']">
      <div className="flex h-[24px] items-center justify-between bg-white">
        <div className="flex items-center">
          <svg width="14" height="16" viewBox="0 0 14 16" className="ml-[3px] shrink-0">
            <path d="M0 2a2 2 0 0 1 2-2h8l4 4v12H0z" fill="#efc35f" />
            <circle cx="5" cy="8" r="1.800" fill="#fff" />
            <path d="M7 7h3v4H7z" fill="#fff" />
          </svg>
          <span className="ml-[7px] text-[#222]">無題 1 — LibreOffice Draw</span>
        </div>
        <div className="mr-px flex">
          <div className="flex h-[24px] w-[46px] items-center justify-center">
            <div className="h-px w-[10px] bg-[#111]" />
          </div>
          <div className="flex h-[24px] w-[46px] items-center justify-center">
            <svg width="10" height="12" viewBox="0 0 10 12" fill="none" stroke="#111">
              <rect x="0.500" y="3.500" width="7" height="8" />
              <path d="M3 3V.5h6.500V9H8" />
            </svg>
          </div>
          <div className="flex h-[24px] w-[46px] items-center justify-center">
            <svg width="11" height="11" viewBox="0 0 11 11" fill="none" stroke="#111">
              <path d="M0 0l11 11M11 0L0 11" />
            </svg>
          </div>
        </div>
      </div>

      <div className="flex h-[21px] items-center bg-[linear-gradient(#ffffff,#fbfbfb)] text-[#111]">
        {menuBar.map(([label, cls]) => (
          <div key={label} className={`flex h-[21px] shrink-0 items-center whitespace-nowrap pl-[8px] ${cls}`}>
            <span>
              <J>{label}</J>
            </span>
          </div>
        ))}
        <svg width="10" height="10" viewBox="0 0 10 10" stroke="#444" fill="none" className="ml-auto mr-[6px]">
          <path d="M0 0l10 10M10 0L0 10" />
        </svg>
      </div>

      <div className="flex h-[40px] items-center border-b border-[#a8a8a8] bg-[linear-gradient(#fbfbfb,#eeeeee)] pl-[1px]">
        <TbIcon name="newDoc" />
        <TbCaret />
        <TbIcon name="open" />
        <TbCaret />
        <TbIcon name="save" />
        <TbCaret />
        <TbSep className="w-[11px]" />
        <TbIcon name="exportDoc" />
        <TbIcon name="pdf" />
        <TbIcon name="print" />
        <TbSep className="w-[8px]" />
        <TbIcon name="cut" />
        <TbIcon name="copy" />
        <TbIcon name="paste" />
        <div className="w-[250px] shrink-0" />
        <div className="h-[6px] w-[3px] shrink-0 border-y border-[#1c88cf]" />
        <div className="w-[3px] shrink-0" />
        <TbIcon name="zoom" />
        <TbSep className="w-[8px]" />
        <TbIcon name="image" />
        <TbIcon name="textbox" />
        <TbIcon name="omega" />
        <TbCaret off />
        <TbIcon name="fontwork" />
        <TbSep className="w-[6px]" />
        <TbIcon name="points" />
        <TbCaret />
        <TbIcon name="align" />
        <TbCaret />
        <TbIcon name="arrange" />
        <TbCaret />
        <TbIcon name="distribute" />
        <TbCaret />
        <TbSep className="w-[10px]" />
        <TbIcon name="shadow" />
        <TbIcon name="crop" />
        <TbSep className="w-[7px]" />
        <TbIcon name="ptsToggle" active />
        <TbIcon name="glue" />
        <TbIcon name="extrude" />
        <TbIcon name="shapes" active />
        <div className="w-[8px] shrink-0" />
        <TbIcon name="lineAngle" active />
        <TbIcon name="addPt" />
        <TbIcon name="delPt" />
        <TbSep className="w-[9px]" />
        <TbIcon name="curve" />
        <TbSep className="w-[8px]" />
        <TbIcon name="curveOff" />
        <TbIcon name="pointDownOff" />
        <TbSep className="w-[7px]" />
        <TbIcon name="cornerAdd" active />
        <TbIcon name="arch" />
        <TbIcon name="arch2" />
        <TbSep className="w-[8px]" />
        <TbIcon name="snapLine" />
      </div>

      <div className="flex h-[933px]">
        <LeftToolbar />
        <PagesPanel />
        <EditArea />
        <Sidebar />
      </div>

      <StatusBar />

      <Menu rows={shapeMenu} className="left-[341px] top-[46px] w-[254px]" />
      <Menu rows={insertMenu} className="left-[593px] top-[109px] w-[151px]" />
      <Menu rows={lineMenu} className="left-[743px] top-[108px] w-[206px]" />
    </div>
  );
}
